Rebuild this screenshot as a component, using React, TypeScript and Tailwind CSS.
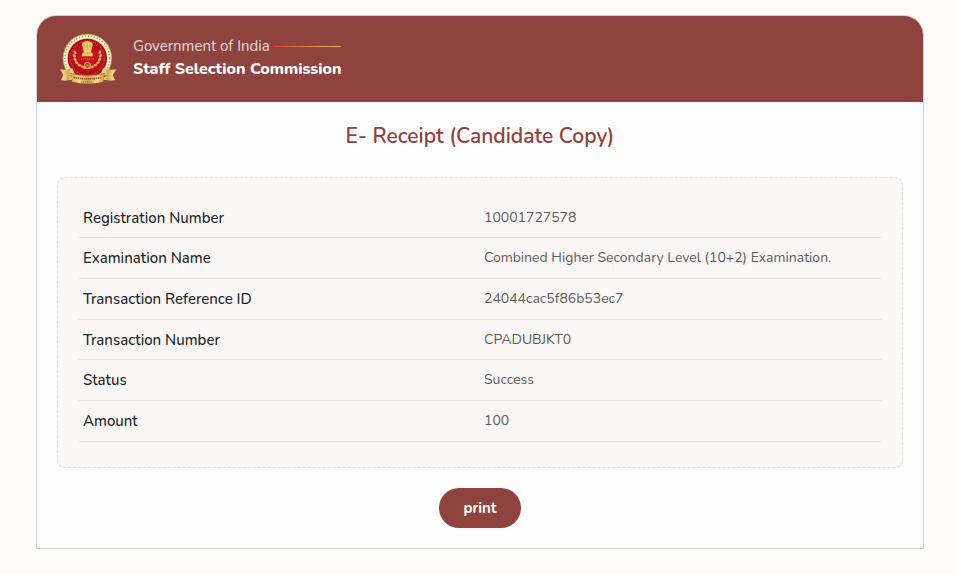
const rows = [
  { label: "Registration Number", value: "10001727578" },
  { label: "Examination Name", value: "Combined Higher Secondary Level (10+2) Examination." },
  { label: "Transaction Reference ID", value: "24044cac5f86b53ec7" },
  { label: "Transaction Number", value: "CPADUBJKT0" },
  { label: "Status", value: "Success" },
  { label: "Amount", value: "100" },
];

const leaves = [0, 1, 2, 3, 4, 5, 6, 7];

function Emblem() {
  return (
    <svg className="h-[51px] w-[59px] shrink-0" viewBox="28 22 177 153" role="img" aria-label="Staff Selection Commission emblem">
      <defs>
        <linearGradient id="ribbon" x1="0" x2="1">
          <stop offset="0" stopColor="#cf9c45" />
          <stop offset="0.25" stopColor="#f3d990" />
          <stop offset="0.5" stopColor="#d3a24a" />
          <stop offset="0.78" stopColor="#f5dd98" />
          <stop offset="1" stopColor="#bd8637" />
        </linearGradient>
        <radialGradient id="disc">
          <stop offset="0" stopColor="#d3151d" />
          <stop offset="1" stopColor="#a90d17" />
        </radialGradient>
      </defs>
      <circle cx="113" cy="98" r="74" fill="#d6ad4d" />
      <circle cx="113" cy="98" r="71" fill="#fffaf0" />
      <circle cx="113" cy="98" r="67" fill="none" stroke="#cf9c38" strokeWidth="5" strokeDasharray="4 5" />
      <circle cx="113" cy="98" r="62" fill="#f3dda0" />
      <circle cx="113" cy="98" r="59" fill="url(#disc)" />
      <circle cx="113" cy="98" r="51" fill="none" stroke="#c4533a" strokeWidth="4" strokeDasharray="3 3" pathLength="300" />
      {/* Laurel branches either side of the lion capital */}
      <g fill="#dba058">
        {leaves.map((i) => {
          const a = ((196 - i * 17) * Math.PI) / 180;
          const x = Math.cos(a) * 39;
          const y = 90 + Math.sin(a) * 36;
          return (
            <g key={i}>
              <ellipse cx={113 + x} cy={y} rx="4" ry="6" transform={"rotate(" + (-30 - i * 10) + " " + (113 + x) + " " + y + ")"} />
              <ellipse cx={113 - x} cy={y} rx="4" ry="6" transform={"rotate(" + (30 + i * 10) + " " + (113 - x) + " " + y + ")"} />
            </g>
          );
        })}
      </g>
      <path d="M106 48q7-6 14 0l8 3q3 7-1 14l-3 15 5 3v9h-32v-9l5-3-3-15q-4-7-1-14z" fill="#f3cb70" />
      <path d="M105 57v9m8-13v18m8-14v9M102 82h22" stroke="#c58a3b" strokeWidth="2" fill="none" />
      <path d="M94 100h39" stroke="#d07a48" strokeWidth="3" strokeDasharray="4 2" />
      <circle cx="113" cy="119" r="9" fill="#b72520" stroke="#e9bb68" strokeWidth="3" />
      <path d="M113 111v16m-8-8h16m-14-6 12 12m0-12-12 12" stroke="#e9bb68" strokeWidth="1" />
      {/* Ribbon */}
      <path d="M30 130q17 5 38-2l12 29q-22 11-47 7l8-16z" fill="url(#ribbon)" />
      <path d="M202 130q-17 5-42-2l-12 29q22 11 49 7l-8-16z" fill="url(#ribbon)" />
      <path d="M59 148l17 3v12zM172 148l-18 3v12z" fill="#7e441c" />
      <path d="M62 143q51 13 104 0l-5 25q-47 12-94 0z" fill="url(#ribbon)" />
      <path d="M62 143q51 13 104 0" fill="none" stroke="#a76225" strokeWidth="2" />
      <path d="M72 155q41 9 84 0" fill="none" stroke="#965127" strokeWidth="5" strokeDasharray="5 2 3 2" />
      <path d="M94 169h37" stroke="#a36831" strokeWidth="3" strokeDasharray="4 2" />
    </svg>
  );
}

export default function App() {
  return (
    <div className="min-h-screen bg-[#fffbfa] pt-[15px] pr-8 pb-6 pl-9 font-[Nunito,Lato,sans-serif]">
      <main className="overflow-hidden rounded-t-[20px] border border-[#d3d3d3] bg-[#fdfdfd]">
        <header className="flex items-center gap-[15px] bg-[#8f433f] px-[22px] pt-[17px] pb-[18px]">
          <Emblem />
          <div>
            <p className="flex items-center gap-1 text-[15px] leading-[21px] text-[#e9d9d8]">
              Government of India
              <span className="h-px w-[67px] bg-linear-to-r from-[#d94631] to-[#e5b869]" />
            </p>
            <p className="text-base leading-6 font-extrabold text-white">Staff Selection Commission</p>
          </div>
        </header>

        <div className="px-5 pt-[18px] pb-5">
          <h1 className="text-center text-[21px] leading-8 font-semibold text-[#8f433f]">E- Receipt (Candidate Copy)</h1>

          <section className="mt-[25px] rounded-lg border border-dashed border-[#e3dfdf] bg-[#fbf7f6] px-[21px] pt-5 pb-[25px]">
            <table className="h-[244px] w-full table-fixed border-collapse text-left leading-5">
              <tbody>
                {rows.map((row) => (
                  <tr key={row.label} className="border-b border-[#e5e3e3]">
                    <th scope="row" className="w-1/2 px-1 text-[15px] font-medium text-[#212529]">{row.label}</th>
                    <td className="px-1 text-sm text-[#5d5d5d]">{row.value}</td>
                  </tr>
                ))}
              </tbody>
            </table>
          </section>

          <div className="mt-5 flex justify-center">
            <button type="button" onClick={() => window.print()} className="h-10 rounded-full bg-[#8f433f] px-6 text-[15px] leading-5 font-bold text-white">
              print
            </button>
          </div>
        </div>
      </main>
    </div>
  );
}
